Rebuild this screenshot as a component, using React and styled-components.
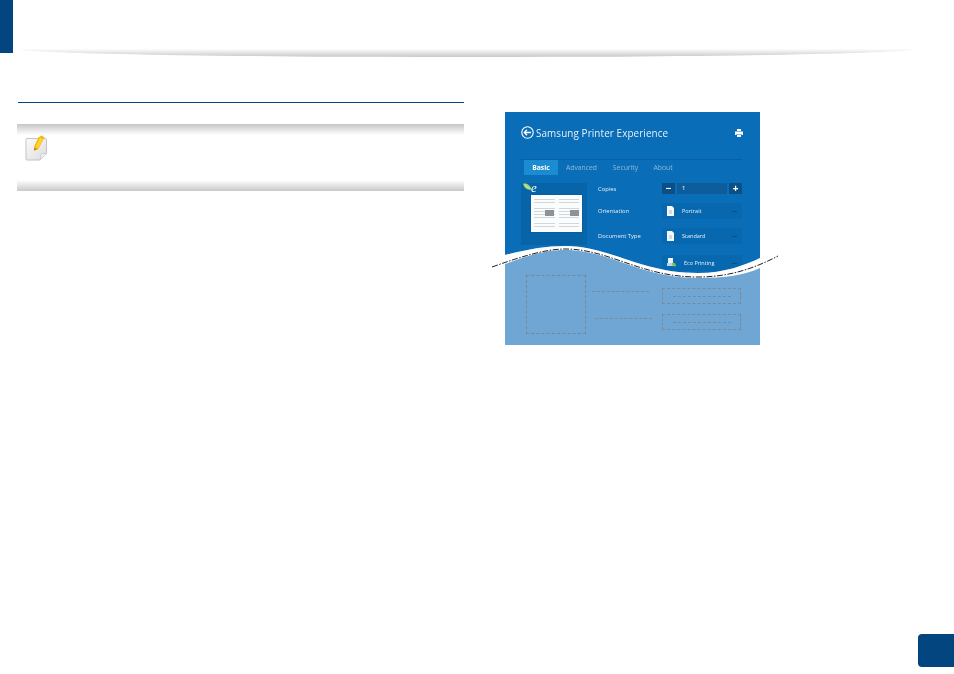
import React from "react";
import styled, { createGlobalStyle } from "styled-components";

const GlobalStyle = createGlobalStyle`
  html, body {
    margin: 0;
    padding: 0;
    background: #fff;
    overflow: hidden;
  }
`;

const WAVE_CLIP =
  'path("M0 0 H255 V146 C240 153,220 161,193 161 C135 161,105 134,60 134 C40 134,25 137,0 143 Z")';

export default function App() {
  return (
    <Page>
      <GlobalStyle />
      <Header>
        <ChapterTab />
        <HeaderShadow />
      </Header>
      <Content>
        <LeftColumn>
          <Rule />
          <NoteBox>
            <NoteBar />
            <NoteBody>
              <NoteIcon />
            </NoteBody>
            <NoteBar $flip />
          </NoteBox>
        </LeftColumn>
        <Figure>
          <TopPanel>
            <TitleRow>
              <BackIcon />
              <Title>Samsung Printer Experience</Title>
              <PrinterIcon />
            </TitleRow>
            <Tabs>
              <Tab $active $w={34}>Basic</Tab>
              <Tab $w={47}>Advanced</Tab>
              <Tab $w={41}>Security</Tab>
              <Tab $w={34}>About</Tab>
            </Tabs>
            <PanelBody>
              <Preview>
                <EcoLogo>
                  <LeafIcon />
                  <EcoLetter>e</EcoLetter>
                </EcoLogo>
                <ThumbPage>
                  <ThumbColumn />
                  <ThumbColumn />
                </ThumbPage>
              </Preview>
              <Settings>
                <SettingRow $short>
                  <SettingLabel>Copies</SettingLabel>
                  <Stepper>
                    <StepButton>−</StepButton>
                    <StepValue>1</StepValue>
                    <StepButton>+</StepButton>
                  </Stepper>
                </SettingRow>
                <SettingRow>
                  <SettingLabel>Orientation</SettingLabel>
                  <Select>
                    <DocIcon />
                    <SelectText>Portrait</SelectText>
                    <SelectCaret />
                  </Select>
                </SettingRow>
                <SettingRow>
                  <SettingLabel>Document Type</SettingLabel>
                  <Select>
                    <DocIcon />
                    <SelectText>Standard</SelectText>
                    <SelectCaret />
                  </Select>
                </SettingRow>
                <SettingRow $lower>
                  <SettingLabel />
                  <Select>
                    <EcoPrintIcon />
                    <SelectText>Eco Printing</SelectText>
                    <SelectCaret />
                  </Select>
                </SettingRow>
              </Settings>
            </PanelBody>
          </TopPanel>
          <LowerPanel>
            <PlaceholderBox />
            <PlaceholderLabels>
              <DashLine $top={16} $left={0} />
              <DashLine $top={26} $left={3} />
            </PlaceholderLabels>
            <PlaceholderFields>
              <PlaceholderField>
                <DashLine />
              </PlaceholderField>
              <PlaceholderField>
                <DashLine />
              </PlaceholderField>
            </PlaceholderFields>
          </LowerPanel>
          <WaveOverlay />
        </Figure>
      </Content>
      <PageBadge />
    </Page>
  );
}

const BackIcon = () => (
  <svg width="13" height="13" viewBox="0 0 13 13" fill="none" stroke="#fff">
    <circle cx="6.5" cy="6.5" r="5.7" strokeWidth="1.1" />
    <path d="M10 6.5H3.4M6 3.8L3.3 6.5 6 9.2" strokeWidth="1.4" />
  </svg>
);

const PrinterSvg = styled.svg`
  margin-left: auto;
  margin-right: -1px;
`;

const PrinterIcon = () => (
  <PrinterSvg width="8" height="8" viewBox="0 0 8 8" fill="#fff">
    <path d="M2 0h4v2H2zM0 2.5h8V6H6.5V5h-5v1H0zM2 5.5h4V8H2z" />
  </PrinterSvg>
);

const LeafIcon = () => (
  <svg width="9" height="8" viewBox="0 0 9 8">
    <path d="M0 0.5C4 0 7 1.5 8.5 6.5 4 7.5 1 5 0 0.5z" fill="#9fd36f" />
    <path d="M1.5 1.5L7 6" stroke="#fff" strokeWidth="0.5" />
  </svg>
);

const DocIcon = () => (
  <svg width="7" height="10" viewBox="0 0 7 10">
    <path d="M0 0h5l2 2v8H0z" fill="#f4f8fb" />
    <path d="M2 5h3M2 7h3" stroke="#7ca9cc" strokeWidth="0.7" />
  </svg>
);

const EcoPrintIcon = () => (
  <svg width="9" height="10" viewBox="0 0 9 10">
    <path d="M1 0h5v6H1z" fill="#eef5fa" />
    <path d="M0 5h7v3H0z" fill="#b9d6ea" />
    <path d="M5 5c2-1 4 0 4 3-2 1-4 0-4-3z" fill="#7fbf63" />
  </svg>
);

const NoteIcon = () => (
  <svg width="24" height="27" viewBox="0 0 24 27">
    <defs>
      <linearGradient id="paper" x1="0" y1="0" x2="1" y2="1">
        <stop offset="0" stopColor="#fbfbfb" />
        <stop offset="1" stopColor="#dcdcdc" />
      </linearGradient>
    </defs>
    <path
      d="M2 3.5h18.500a1 1 0 0 1 1 1V18l-6.500 7H2a1 1 0 0 1-1-1V4.500a1 1 0 0 1 1-1z"
      fill="url(#paper)"
      stroke="#bdbdbd"
      strokeWidth="0.9"
    />
    <path d="M15 25c.5-3 1-5.500 1.500-6.500 1.500-.3 3.500-.3 5 .2z" fill="#f0f0f0" stroke="#c4c4c4" strokeWidth="0.7" />
    <path d="M13.500 2.500L16.500 0.500 19.500 2.500 13 14.500 9 15.500 9.500 11z" fill="#f7b500" />
    <path d="M15 2.500L18 4 13 13.500 10.500 12z" fill="#ffd338" />
    <path d="M9 15.500L9.500 12.500 11.500 14.500z" fill="#c96f1a" />
  </svg>
);

const WaveSvg = styled.svg`
  position: absolute;
  left: -15px;
  top: 120px;
  overflow: visible;
`;

const WaveOverlay = () => (
  <WaveSvg width="295" height="60" viewBox="-15 120 295 60" fill="none">
    <path
      d="M0 143C25 137,40 134,60 134C105 134,135 161,193 161C220 161,240 153,255 146V156C240 163,220 166,193 166C135 166,105 138,60 138C40 138,25 143,0 152Z"
      fill="#fff"
    />
    <path
      d="M-13 155C15 145,40 137,60 137C105 137,135 165,193 165C225 165,250 156,273 144"
      stroke="#222"
      strokeWidth="1"
      strokeDasharray="6 1.500 1.500 1.500"
    />
  </WaveSvg>
);

const Page = styled.div`
  width: 954px;
  height: 674px;
  display: flex;
  flex-direction: column;
  font-family: "Open Sans", "Liberation Sans", sans-serif;
`;

const Header = styled.header`
  display: flex;
  height: 57px;
`;

const ChapterTab = styled.div`
  width: 13px;
  height: 53px;
  background: #02457f;
`;

const HeaderShadow = styled.div`
  flex: 1;
  height: 8px;
  margin: 49px 39px 0 5px;
  background: linear-gradient(#fdfdfd, #e8e8e8 40%, #c8c8c8);
  border-radius: 0 0 50% 50% / 0 0 100% 100%;
`;

const Content = styled.main`
  display: flex;
  align-items: flex-start;
`;

const LeftColumn = styled.section`
  width: 447px;
  margin-left: 17px;
  padding-top: 45px;
`;

const Rule = styled.div`
  height: 1px;
  margin-left: 1px;
  background: #02457f;
`;

const NoteBox = styled.div`
  height: 67px;
  margin-top: 21px;
  display: flex;
  flex-direction: column;
`;

const NoteBar = styled.div`
  height: 11px;
  background: linear-gradient(${(p) => (p.$flip ? "#fff, #c9c9c9" : "#c6c6c6, #fff")});
`;

const NoteBody = styled.div`
  flex: 1;
  padding: 0 0 0 8px;
  display: flex;
  align-items: flex-start;
`;

const Figure = styled.figure`
  position: relative;
  width: 255px;
  height: 233px;
  margin: 55px 0 0 41px;
  display: flex;
  flex-direction: column;
  background: #6fa6d3;
`;

const TopPanel = styled.div`
  height: 163px;
  padding: 14px 18px 0 16px;
  box-sizing: border-box;
  background: #0a6db7;
  clip-path: ${WAVE_CLIP};
  color: #fff;
  filter: blur(0.5px);
`;

const TitleRow = styled.div`
  display: flex;
  align-items: center;
  height: 13px;
  gap: 2px;
`;

const Title = styled.span`
  font-size: 9.900px;
  font-weight: 400;
  letter-spacing: 0.1px;
  white-space: nowrap;
  opacity: 0.9;
`;

const Tabs = styled.div`
  display: flex;
  height: 15px;
  margin-top: 20px;
  padding-left: 3px;
  border-top: 1px solid rgba(0, 60, 110, 0.25);
`;

const Tab = styled.div`
  width: ${(p) => p.$w}px;
  font-size: 6.800px;
  line-height: 15px;
  text-align: center;
  white-space: nowrap;
  font-weight: ${(p) => (p.$active ? 700 : 400)};
  background: ${(p) => (p.$active ? "#1b8ccf" : "transparent")};
  color: ${(p) => (p.$active ? "#fff" : "rgba(255, 255, 255, 0.5)")};
`;

const PanelBody = styled.div`
  display: flex;
  gap: 11px;
  margin-top: 8px;
`;

const Preview = styled.div`
  width: 66px;
  height: 62px;
  flex: none;
  background: rgba(0, 70, 125, 0.22);
`;

const EcoLogo = styled.div`
  display: flex;
  align-items: flex-start;
  height: 12px;
  padding-left: 2px;
`;

const EcoLetter = styled.span`
  font-family: "Liberation Serif", serif;
  font-style: italic;
  font-size: 13px;
  line-height: 10px;
  margin-left: -1px;
`;

const ThumbPage = styled.div`
  width: 51px;
  height: 37px;
  margin-left: 10px;
  box-sizing: border-box;
  padding: 4px 3px 5px;
  display: flex;
  gap: 4px;
  background: #fbfcfd;
  box-shadow: 0 0 1px rgba(0, 30, 60, 0.4);
`;

const ThumbColumn = styled.div`
  flex: 1;
  background:
    linear-gradient(#fbfcfd, #fbfcfd) 0 6px / 100% 3px no-repeat,
    linear-gradient(#8d9298, #8d9298) 11px 11px / 9px 6px no-repeat,
    linear-gradient(#fbfcfd, #fbfcfd) 0 19px / 100% 3px no-repeat,
    repeating-linear-gradient(#d3d6d9 0 1px, #fbfcfd 1px 3px);
`;

const Settings = styled.div`
  flex: 1;
  display: flex;
  flex-direction: column;
  gap: 9px;
`;

const SettingRow = styled.div`
  display: flex;
  align-items: center;
  height: ${(p) => (p.$short ? 11 : 16)}px;
  margin-top: ${(p) => (p.$lower ? 2 : 0)}px;
`;

const SettingLabel = styled.span`
  width: 64px;
  flex: none;
  font-size: 5.800px;
  font-weight: 400;
  white-space: nowrap;
  opacity: 0.9;
`;

const Stepper = styled.div`
  display: flex;
  gap: 2px;
  flex: 1;
  height: 11px;
`;

const StepButton = styled.div`
  width: 13px;
  background: #0b4f87;
  font-size: 10px;
  font-weight: 700;
  line-height: 10px;
  text-align: center;
`;

const StepValue = styled.div`
  flex: 1;
  background: #0d5d9d;
  font-size: 6px;
  line-height: 11px;
  padding-left: 5px;
`;

const Select = styled.div`
  flex: 1;
  height: 16px;
  display: flex;
  align-items: center;
  gap: 8px;
  padding: 0 5px;
  background: rgba(0, 70, 125, 0.12);
`;

const SelectText = styled.span`
  font-size: 5.500px;
  white-space: nowrap;
  opacity: 0.9;
`;

const SelectCaret = styled.span`
  width: 5px;
  height: 1px;
  margin-left: auto;
  background: rgba(0, 50, 95, 0.5);
`;

const LowerPanel = styled.div`
  flex: 1;
  display: flex;
  align-items: flex-start;
  padding-left: 21px;
  filter: blur(0.3px);
`;

const PlaceholderBox = styled.div`
  width: 60px;
  height: 59px;
  box-sizing: border-box;
  border: 1px dashed rgba(120, 125, 130, 0.7);
`;

const PlaceholderLabels = styled.div`
  width: 60px;
  margin-left: 6px;
`;

const DashLine = styled.div`
  height: 0;
  width: ${(p) => (p.$top === undefined ? 58 : 57)}px;
  margin: ${(p) => p.$top ?? 0}px 0 0 ${(p) => p.$left ?? 0}px;
  border-top: 1px dashed rgba(125, 125, 125, 0.65);
`;

const PlaceholderFields = styled.div`
  width: 79px;
  margin: 13px 0 0 10px;
  display: flex;
  flex-direction: column;
  gap: 10px;
`;

const PlaceholderField = styled.div`
  height: 16px;
  box-sizing: border-box;
  border: 1px dashed rgba(125, 125, 125, 0.65);
  display: flex;
  align-items: center;
  justify-content: center;
`;

const PageBadge = styled.div`
  width: 36px;
  height: 33px;
  margin: auto 0 7px auto;
  background: #02457f;
  border-radius: 4px 0 0 4px;
`;
